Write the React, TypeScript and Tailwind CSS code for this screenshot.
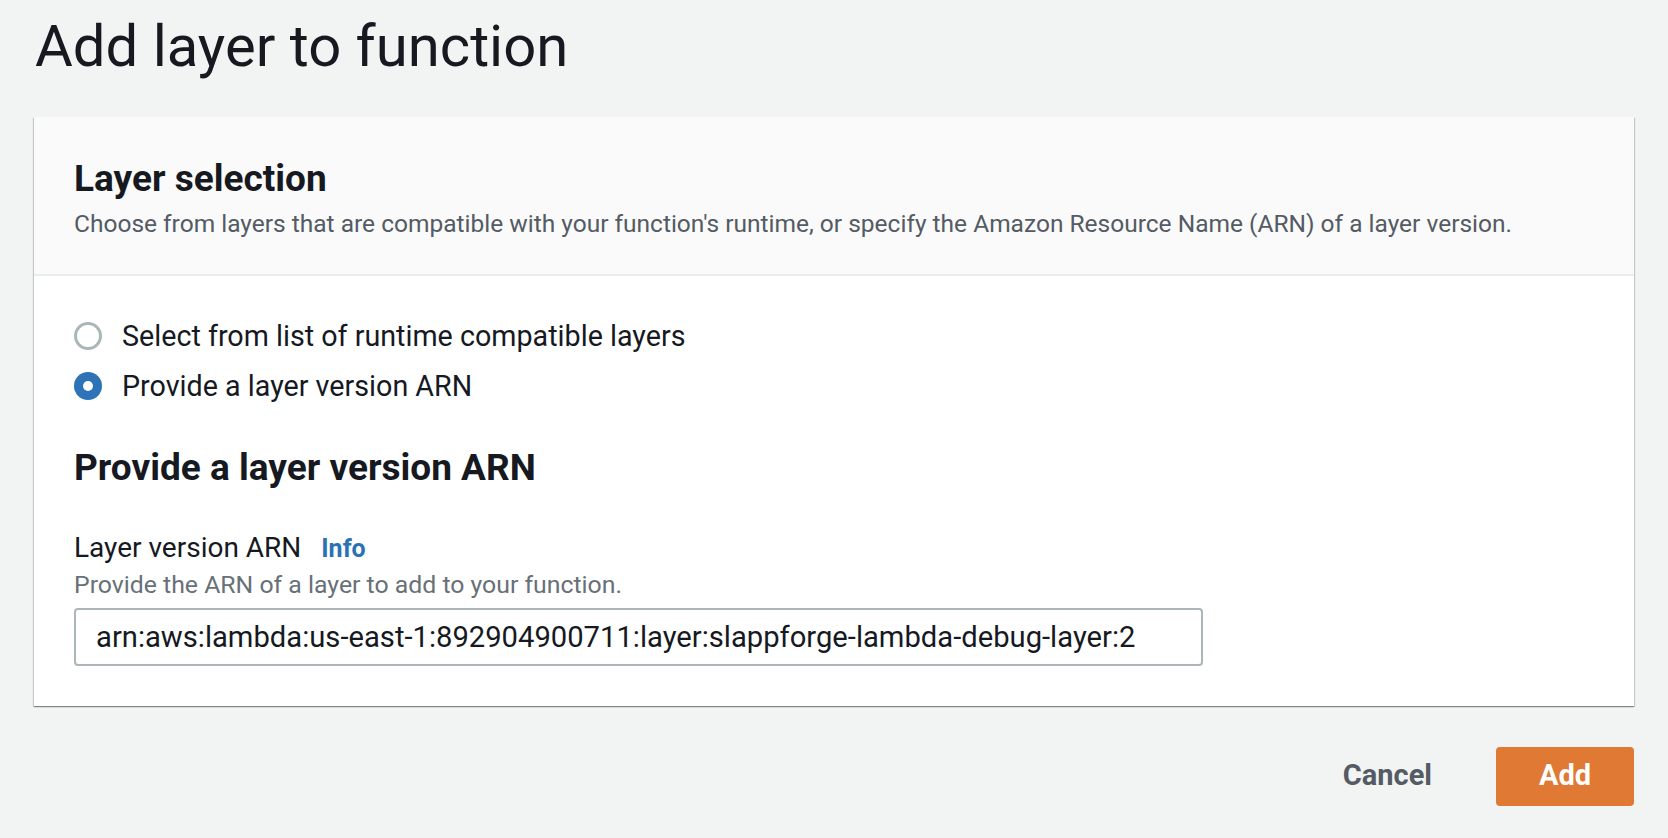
import React, { useState } from 'react';

const font = { fontFamily: 'Roboto, "Noto Sans", sans-serif' };

const Radio = ({ checked, label, onClick }: { checked: boolean; label: string; onClick: () => void }) => (
  <label className="flex items-center h-[50px] cursor-pointer" onClick={onClick}>
    {checked ? (
      <span className="w-[28px] h-[28px] rounded-full bg-[#2e73b8] flex items-center justify-center shrink-0">
        <span className="w-[10px] h-[10px] rounded-full bg-white" />
      </span>
    ) : (
      <span className="w-[28px] h-[28px] rounded-full border-[3px] border-[#aab7b8] bg-white shrink-0" />
    )}
    <span className="ml-[20px] text-[28.7px] leading-[36px] text-[#16191f]">{label}</span>
  </label>
);

const App = () => {
  const [mode, setMode] = useState<'list' | 'arn'>('arn');
  const [arn, setArn] = useState('arn:aws:lambda:us-east-1:892904900711:layer:slappforge-lambda-debug-layer:2');

  return (
    <div className="min-h-screen bg-[#f2f3f3] px-[34px]" style={font}>
      <h1 className="pt-[12px] text-[58px] leading-[68px] font-normal text-[#16191f] pl-[1px]">Add layer to function</h1>

      <div className="mt-[37px] bg-white shadow-[0_1px_1px_0_rgba(0,28,36,0.3),1px_1px_1px_0_rgba(0,28,36,0.15),-1px_1px_1px_0_rgba(0,28,36,0.15)]">
        <div className="bg-[#fafafa] border-b-2 border-[#eaeded] px-[40px] pt-[40px] pb-[34px]">
          <h2 className="text-[37px] leading-[44px] font-bold text-[#16191f]">Layer selection</h2>
          <p className="mt-[7px] text-[24.5px] leading-[32px] text-[#545b64]">
            Choose from layers that are compatible with your function's runtime, or specify the Amazon Resource Name (ARN) of a layer version.
          </p>
        </div>

        <div className="px-[40px] pt-[35px] pb-[40px]">
          <div className="flex flex-col">
            <Radio checked={mode === 'list'} label="Select from list of runtime compatible layers" onClick={() => setMode('list')} />
            <Radio checked={mode === 'arn'} label="Provide a layer version ARN" onClick={() => setMode('arn')} />
          </div>

          <h2 className="mt-[35px] text-[37px] leading-[44px] font-bold text-[#16191f]">Provide a layer version ARN</h2>

          <div className="mt-[40px] flex items-baseline">
            <span className="text-[28px] leading-[36px] text-[#16191f]">Layer version ARN</span>
            <a href="#" className="ml-[20px] text-[25px] font-bold text-[#2a72b5]">Info</a>
          </div>
          <p className="mt-[1px] text-[24.8px] leading-[32px] text-[#687078]">Provide the ARN of a layer to add to your function.</p>

          <input
            value={arn}
            onChange={(e) => setArn(e.target.value)}
            className="mt-[7px] w-[1129px] h-[58px] border-2 border-[#aab7b8] rounded-[4px] px-[20px] text-[29.2px] text-[#16191f] bg-white outline-none"
            style={font}
          />
        </div>
      </div>

      <div className="mt-[41px] flex justify-end items-center gap-[44px]">
        <button className="px-[20px] h-[59px] text-[29px] font-bold text-[#545b64]" style={font}>Cancel</button>
        <button className="w-[138px] h-[59px] rounded-[4px] bg-[#e07934] text-[29px] font-bold text-white" style={font}>Add</button>
      </div>
    </div>
  );
};

export default App;
